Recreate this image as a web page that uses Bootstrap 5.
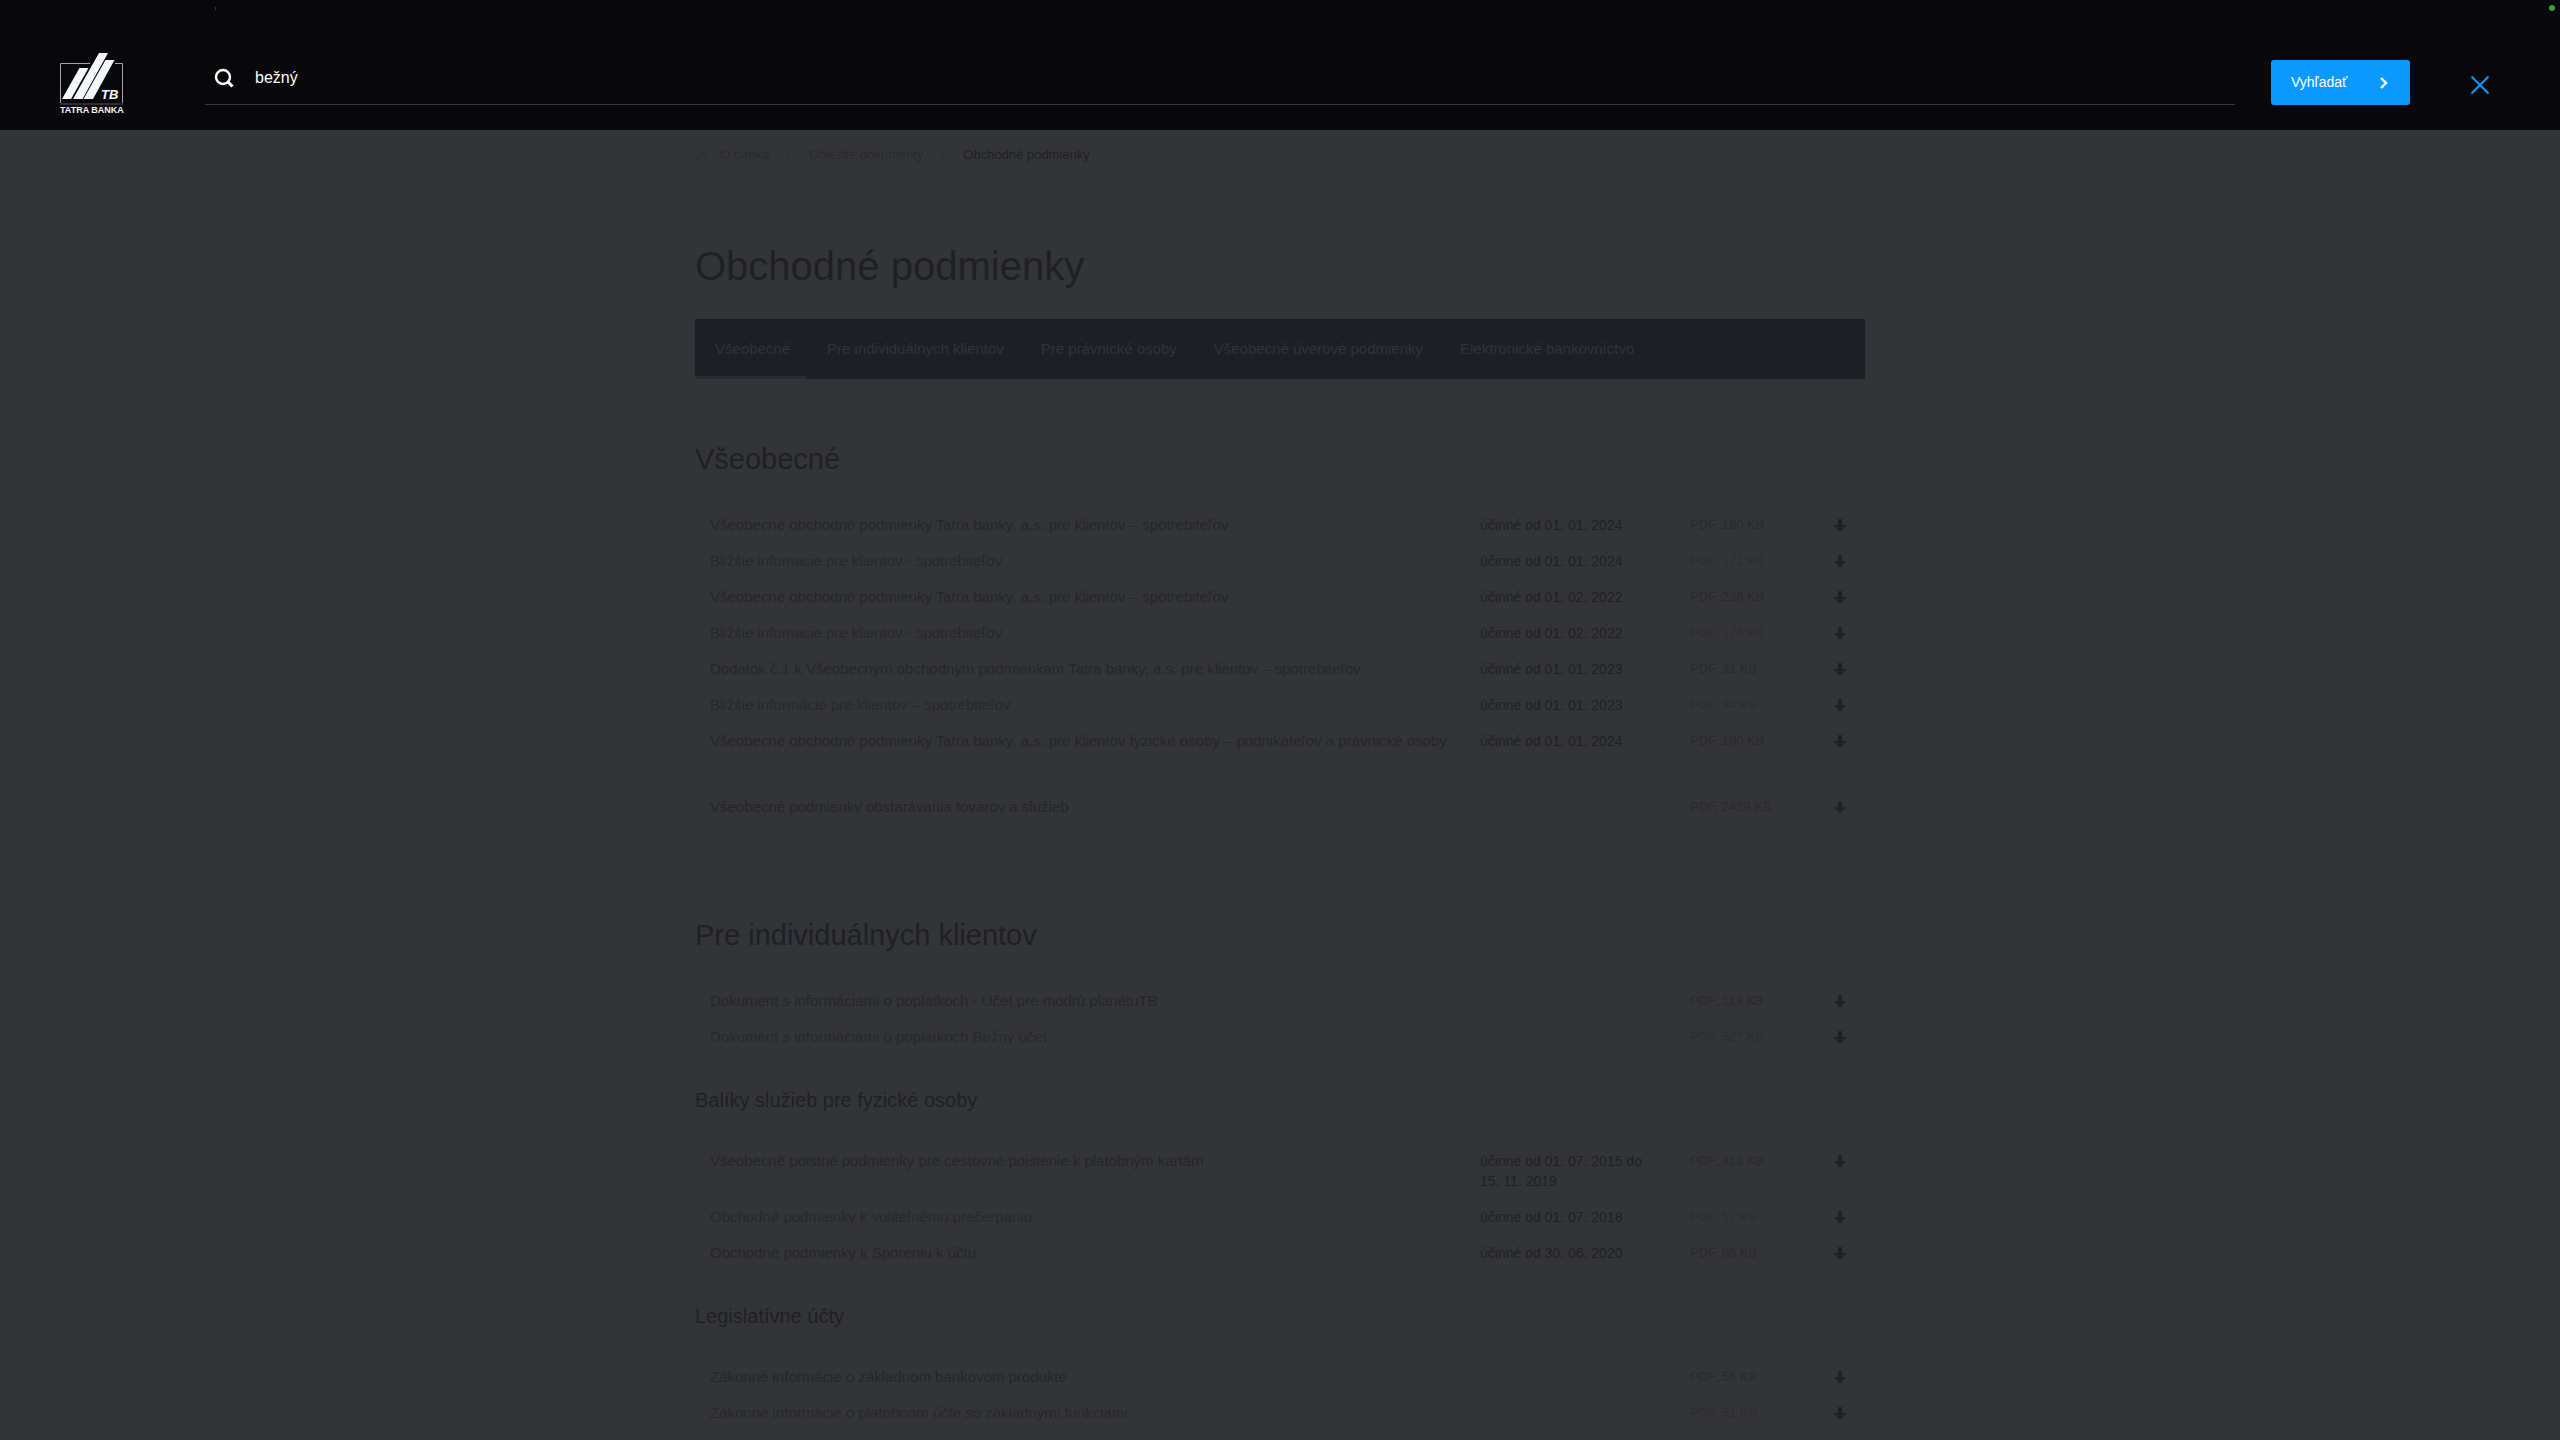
<!DOCTYPE html>
<html lang="sk">
<head>
<meta charset="utf-8">
<meta name="viewport" content="width=device-width, initial-scale=1">
<title>Obchodné podmienky | Tatra banka</title>
<link href="https://cdn.jsdelivr.net/npm/bootstrap@5.3.0/dist/css/bootstrap.min.css" rel="stylesheet">
<style>
  :root { --page: #333438; --ink: #1f2025; --bar: #1d1f27; --accent: #0a99ff; }
  body { background: var(--page); color: var(--ink); font: 15px/20px "Liberation Sans", Arial, sans-serif; overflow-x: hidden; }
  a { color: inherit; text-decoration: none; }

  .search-bar { background: #08080a; min-height: 130px; padding: 52px 60px 0; }
  .brand-mark { width: 145px; }
  .search-form { height: 45px; gap: 36px; }
  .search-field { height: 45px; padding: 0 9px 8px; gap: 21px; border-bottom: 1px solid #38393c; }
  .search-field input { background: none; border: 0; outline: 0; color: #fff; font-size: 16px; }
  .btn-search { width: 139px; height: 45px; padding: 0 20px; background: var(--accent); color: #fff; font-size: 14px; border: 0; border-radius: 3px; }
  .btn-search:hover { background: #0087e6; color: #fff; }
  .btn-dismiss { margin: 16px 3px 0 53px; padding: 8px; line-height: 0; background: none; border: 0; }
  .status-dot { right: 5px; top: 5px; width: 6px; height: 6px; background: #2fa342; }
  .status-tick { left: 215px; top: 7px; width: 1px; height: 3px; background: #333438; }

  .page { width: 100%; max-width: 1170px; }
  .trail { margin-top: 15px; font-size: 13px; }
  .trail li { color: #292a2e; }
  .trail li.active { color: var(--ink); }
  .trail .sep { width: 40px; line-height: 0; }
  .trail .slashes { width: 25px; line-height: 0; }
  h1 { margin: 77px 0 29px; font-size: 40px; line-height: 48px; font-weight: 400; }
  .tabs { background: var(--bar); height: 60px; }
  .tabs .nav-link { display: flex; align-items: center; height: 60px; padding: 3px 17px 0 20px; color: #313338; border-bottom: 3px solid transparent; }
  .tabs .nav-link.active { border-bottom-color: #292b31; }
  h2 { margin: 62px 0 30px; font-size: 29px; line-height: 36px; font-weight: 400; }
  h2.later { margin-top: 92px; }
  h3 { margin: 33px 0 31px; font-size: 20px; line-height: 24px; font-weight: 400; }

  .docs { width: 100%; table-layout: fixed; }
  .docs + .docs { margin-top: 30px; }
  .docs td { padding: 8px 15px; vertical-align: top; }
  .docs .c-date { width: 210px; }
  .docs .c-size { width: 130px; }
  .docs .c-get { width: 60px; }
  .docs td:nth-child(1) { color: #25262b; }
  .docs td:nth-child(2) { font-size: 14px; }
  .docs td:nth-child(3) { font-size: 13px; color: #292a2e; }
  .docs tr:nth-child(even) td:nth-child(1) { color: #27282c; }
  .docs tr:nth-child(even) td:nth-child(3) { color: #2c2d31; }
  .docs td:nth-child(4) { padding-right: 19px; }
  .docs td:nth-child(4) a { display: flex; justify-content: flex-end; align-items: center; height: 20px; }
</style>
</head>
<body>
<svg class="d-none" aria-hidden="true">
  <symbol id="down" viewBox="0 0 12 12"><path d="M4 0h4v6h4v1L9 9 7 12H5L3 9 0 7V6h4z" fill="#202126"/></symbol>
  <symbol id="chev" viewBox="0 0 4 6"><path d="M.5.5 3 3 .5 5.500" fill="none" stroke="#2a2b2f"/></symbol>
</svg>

<header class="search-bar d-flex align-items-start position-relative">
  <span class="status-tick position-absolute"></span>
  <span class="status-dot position-absolute rounded-circle"></span>
  <a href="#" class="brand-mark flex-shrink-0" aria-label="Tatra banka">
    <svg width="72" height="66" viewBox="60 52 72 66" class="d-block">
      <path d="M90 63.500H60.500V103M115 63.500h7.500V103" fill="none" stroke="#a3a5a8"/>
      <path d="M60 103h63v2H60z" fill="#2b2d33"/>
      <path d="M79.500 68H88.500L71 99H62zM99 53h9L82.500 99H73zM105.500 60h9L93 99H83.500z" fill="#f4f8fb"/>
      <text x="101" y="98.500" font-size="13" font-weight="700" font-style="italic" fill="#f4f8fb">TB</text>
      <text x="60" y="113" font-size="9" font-weight="700" fill="#f4f8fb">TATRA BANKA</text>
    </svg>
  </a>
  <form class="search-form d-flex flex-grow-1 mt-2" role="search">
    <div class="search-field d-flex align-items-center flex-grow-1">
      <label for="q" class="lh-1">
        <svg width="20" height="20" viewBox="0 0 20 20" class="d-block" role="img" aria-label="Hľadať"><circle cx="9" cy="9" r="7" fill="none" stroke="#fff" stroke-width="2.400"/><path d="m14 14 4.500 4.500" stroke="#fff" stroke-width="3"/></svg>
      </label>
      <input id="q" type="text" value="bežný" class="flex-grow-1 p-0">
    </div>
    <button type="submit" class="btn btn-search d-flex align-items-center justify-content-between">Vyhľadať
      <svg width="14" height="14" viewBox="0 0 14 14"><path d="m5 2 5 5-5 5" fill="none" stroke="#fff" stroke-width="2.400"/></svg>
    </button>
  </form>
  <button type="button" class="btn-dismiss" aria-label="Zavrieť">
    <svg width="18" height="18" viewBox="0 0 18 18"><path d="m.5.5 17 17m0-17-17 17" stroke="#0a99ff" stroke-width="2"/></svg>
  </button>
</header>

<main class="page mx-auto pb-2">
  <nav aria-label="Omrvinky">
    <ol class="trail list-unstyled d-flex mb-0">
      <li class="slashes d-flex align-items-center"><svg width="13" height="12" viewBox="0 0 13 12"><path d="M1 11 5 4M4 11l6-10M8 11l4-7" stroke="#2a2b2f"/></svg></li>
      <li><a href="#">O banka</a></li>
      <li class="sep d-flex align-items-center justify-content-center" aria-hidden="true"><svg width="4" height="6"><use href="#chev"/></svg></li>
      <li><a href="#">Dôležité dokumenty</a></li>
      <li class="sep d-flex align-items-center justify-content-center" aria-hidden="true"><svg width="4" height="6"><use href="#chev"/></svg></li>
      <li class="active" aria-current="page">Obchodné podmienky</li>
    </ol>
  </nav>

  <h1>Obchodné podmienky</h1>
  <nav class="tabs nav" aria-label="Sekcie">
    <a class="nav-link active" href="#">Všeobecné</a>
    <a class="nav-link" href="#">Pre individuálnych klientov</a>
    <a class="nav-link" href="#">Pre právnické osoby</a>
    <a class="nav-link" href="#">Všeobecné úverové podmienky</a>
    <a class="nav-link" href="#">Elektronické bankovníctvo</a>
  </nav>

  <h2>Všeobecné</h2>
  <table class="docs">
    <colgroup><col><col class="c-date"><col class="c-size"><col class="c-get"></colgroup>
    <tbody>
    <tr><td><a href="#">Všeobecné obchodné podmienky Tatra banky, a.s. pre klientov – spotrebiteľov</a></td><td>účinné od 01. 01. 2024</td><td>PDF, 180 KB</td><td><a href="#" aria-label="Stiahnuť"><svg width="12" height="12"><use href="#down"/></svg></a></td></tr>
    <tr><td><a href="#">Bližšie infomacie pre klientov - spotrebiteľov</a></td><td>účinné od 01. 01. 2024</td><td>PDF, 171 KB</td><td><a href="#" aria-label="Stiahnuť"><svg width="12" height="12"><use href="#down"/></svg></a></td></tr>
    <tr><td><a href="#">Všeobecné obchodné podmienky Tatra banky, a.s. pre klientov – spotrebiteľov</a></td><td>účinné od 01. 02. 2022</td><td>PDF, 236 KB</td><td><a href="#" aria-label="Stiahnuť"><svg width="12" height="12"><use href="#down"/></svg></a></td></tr>
    <tr><td><a href="#">Bližšie infomacie pre klientov - spotrebiteľov</a></td><td>účinné od 01. 02. 2022</td><td>PDF, 174 KB</td><td><a href="#" aria-label="Stiahnuť"><svg width="12" height="12"><use href="#down"/></svg></a></td></tr>
    <tr><td><a href="#">Dodatok č.1 k Všeobecným obchodným podmienkam Tatra banky, a.s. pre klientov – spotrebiteľov</a></td><td>účinné od 01. 01. 2023</td><td>PDF, 31 KB</td><td><a href="#" aria-label="Stiahnuť"><svg width="12" height="12"><use href="#down"/></svg></a></td></tr>
    <tr><td><a href="#">Bližšie informácie pre klientov – spotrebiteľov</a></td><td>účinné od 01. 01. 2023</td><td>PDF, 34 KB</td><td><a href="#" aria-label="Stiahnuť"><svg width="12" height="12"><use href="#down"/></svg></a></td></tr>
    <tr><td class="text-nowrap"><a href="#">Všeobecné obchodné podmienky Tatra banky, a.s. pre klientov fyzické osoby – podnikateľov a právnické osoby</a></td><td>účinné od 01. 01. 2024</td><td>PDF, 190 KB</td><td><a href="#" aria-label="Stiahnuť"><svg width="12" height="12"><use href="#down"/></svg></a></td></tr>
    </tbody>
  </table>
  <table class="docs">
    <colgroup><col><col class="c-date"><col class="c-size"><col class="c-get"></colgroup>
    <tbody>
    <tr><td><a href="#">Všeobecné podmienky obstarávania tovarov a služieb</a></td><td></td><td>PDF, 2429 KB</td><td><a href="#" aria-label="Stiahnuť"><svg width="12" height="12"><use href="#down"/></svg></a></td></tr>
    </tbody>
  </table>

  <h2 class="later">Pre individuálnych klientov</h2>
  <table class="docs">
    <colgroup><col><col class="c-date"><col class="c-size"><col class="c-get"></colgroup>
    <tbody>
    <tr><td><a href="#">Dokument s informáciami o poplatkoch - Účet pre modrú planétuTB</a></td><td></td><td>PDF, 113 KB</td><td><a href="#" aria-label="Stiahnuť"><svg width="12" height="12"><use href="#down"/></svg></a></td></tr>
    <tr><td><a href="#">Dokument s informáciami o poplatkoch Bežný účet</a></td><td></td><td>PDF, 527 KB</td><td><a href="#" aria-label="Stiahnuť"><svg width="12" height="12"><use href="#down"/></svg></a></td></tr>
    </tbody>
  </table>

  <h3>Balíky služieb pre fyzické osoby</h3>
  <table class="docs">
    <colgroup><col><col class="c-date"><col class="c-size"><col class="c-get"></colgroup>
    <tbody>
    <tr><td><a href="#">Všeobecné poistné podmienky pre cestovné poistenie k platobným kartám</a></td><td>účinné od 01. 07. 2015 do 15. 11. 2019</td><td>PDF, 313 KB</td><td><a href="#" aria-label="Stiahnuť"><svg width="12" height="12"><use href="#down"/></svg></a></td></tr>
    <tr><td><a href="#">Obchodné podmienky k voliteľnému prečerpaniu</a></td><td>účinné od 01. 07. 2018</td><td>PDF, 57 KB</td><td><a href="#" aria-label="Stiahnuť"><svg width="12" height="12"><use href="#down"/></svg></a></td></tr>
    <tr><td><a href="#">Obchodné podmienky k Sporeniu k účtu</a></td><td>účinné od 30. 06. 2020</td><td>PDF, 68 KB</td><td><a href="#" aria-label="Stiahnuť"><svg width="12" height="12"><use href="#down"/></svg></a></td></tr>
    </tbody>
  </table>

  <h3>Legislatívne účty</h3>
  <table class="docs">
    <colgroup><col><col class="c-date"><col class="c-size"><col class="c-get"></colgroup>
    <tbody>
    <tr><td><a href="#">Zákonné informácie o základnom bankovom produkte</a></td><td></td><td>PDF, 56 KB</td><td><a href="#" aria-label="Stiahnuť"><svg width="12" height="12"><use href="#down"/></svg></a></td></tr>
    <tr><td><a href="#">Zákonné informácie o platobnom účte so základnými funkciami</a></td><td></td><td>PDF, 51 KB</td><td><a href="#" aria-label="Stiahnuť"><svg width="12" height="12"><use href="#down"/></svg></a></td></tr>
    </tbody>
  </table>
</main>
<script src="https://cdn.jsdelivr.net/npm/bootstrap@5.3.0/dist/js/bootstrap.bundle.min.js"></script>
</body>
</html>
